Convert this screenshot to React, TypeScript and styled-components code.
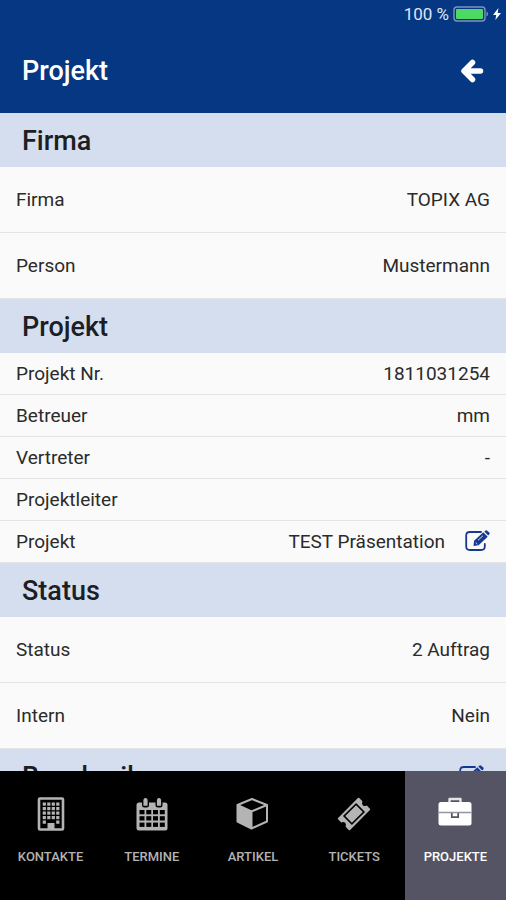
import React from "react";
import styled, { createGlobalStyle } from "styled-components";

const GlobalStyle = createGlobalStyle`
  *, *::before, *::after { box-sizing: border-box; }
  html, body { margin: 0; height: 100%; }
  #root { height: 100%; }
  body {
    background: #fafafa;
    color: #2b2b2b;
    font-family: Roboto, "Liberation Sans", sans-serif;
    overflow: hidden;
  }
`;

const Screen = styled.div`
  display: flex;
  flex-direction: column;
  height: 100vh;
`;

const Header = styled.header`
  flex: none;
  background: #053783;
  color: #fff;
`;

const StatusBar = styled.div`
  display: flex;
  align-items: center;
  justify-content: flex-end;
  gap: 4px;
  height: 28px;
  padding: 0 5px;
  font-size: 17px;
  color: #dfe6f5;
`;

const TitleBar = styled.div`
  display: flex;
  align-items: center;
  justify-content: space-between;
  height: 85px;
  padding: 0 22px;
`;

const Title = styled.h1`
  margin: 0;
  font-size: 27px;
  font-weight: 500;
`;

const IconButton = styled.button`
  display: flex;
  padding: 0;
  border: 0;
  background: none;
  color: inherit;
  cursor: pointer;
`;

const EditButton = styled(IconButton)`
  margin-left: 20px;
  color: #17388f;
`;

const Content = styled.main`
  flex: 1;
  min-height: 0;
  overflow: hidden;
`;

const SectionHeader = styled.div`
  display: flex;
  align-items: center;
  justify-content: space-between;
  height: 54px;
  padding: 0 22px;
  background: #d5deee;
`;

const SectionTitle = styled.h2`
  margin: 0;
  padding-top: 2px;
  font-size: 27px;
  font-weight: 500;
  color: #1c1e24;
`;

const Fields = styled.dl`
  margin: 0;
`;

const Row = styled.div<{ $tall?: boolean }>`
  display: flex;
  align-items: center;
  height: ${(p) => (p.$tall ? 66 : 42)}px;
  padding: 0 16px 1px;
  border-bottom: 1px solid #e3e4e6;
  font-size: 19px;
`;

const Label = styled.dt`
  flex: 1;
`;

const Value = styled.dd`
  display: flex;
  align-items: center;
  margin: 0;
`;

const TabBar = styled.nav`
  flex: none;
  display: grid;
  grid-template-columns: repeat(5, 1fr);
  height: 129px;
  background: #000;
`;

const Tab = styled.a<{ $active?: boolean }>`
  display: flex;
  flex-direction: column;
  align-items: center;
  gap: 18px;
  padding-top: 26px;
  background: ${(p) => (p.$active ? "#555464" : "transparent")};
  color: ${(p) => (p.$active ? "#fff" : "#b4b4b4")};
  font-size: 13px;
  font-weight: 500;
  line-height: 16px;
  text-decoration: none;
`;

const BatteryIcon = () => (
  <svg width="36" height="18" viewBox="0 0 36 18" aria-hidden="true">
    <rect x="1" y="2" width="31" height="14" rx="3" fill="none" stroke="#7f94bf" strokeWidth="1.4" />
    <rect x="3" y="4" width="27" height="10" rx="1" fill="#4cd964" />
    <path d="M33.500 6.500c2 .8 2 4.200 0 5z" fill="#7f94bf" />
  </svg>
);

const BoltIcon = () => (
  <svg width="8" height="14" viewBox="0 0 8 14" aria-hidden="true">
    <path d="M5.400 1 0 8h3.200L2.400 13 8 6H4.700z" fill="#fff" />
  </svg>
);

const BackIcon = () => (
  <svg width="24" height="26" viewBox="0 0 24 26" aria-hidden="true">
    <path d="M12.500 4.500 4 13l8.500 8.500M5 13h15.500" fill="none" stroke="#fff" strokeWidth="5.500" strokeLinecap="round" strokeLinejoin="round" />
  </svg>
);

const EditIcon = () => (
  <svg width="25" height="22" viewBox="0 0 25 22" aria-hidden="true">
    <path d="M16 2H5Q1.200 2 1.200 5.500v11Q1.200 20 5 20h11q3.800 0 3.800-3.500V14" fill="none" stroke="currentColor" strokeWidth="1.800" strokeLinecap="round" />
    <path d="M8.500 16l.6-5.300L18.300 2.300l4.400 4.400-9.100 8.600z" fill="currentColor" />
    <path d="M19.300 1.600 20.600.5q.8-.6 1.600.2l2.100 1.900q.8.800 0 1.600l-1.100 1.400z" fill="currentColor" />
    <path d="M13 10.300l5-4.600M10.700 12.500l1.700 1.700" stroke="#d5deee" strokeWidth="1" />
  </svg>
);

const BuildingIcon = () => (
  <svg width="34" height="34" viewBox="0 0 34 34" aria-hidden="true">
    <rect x="5" y="1.500" width="24" height="31" rx="1" fill="none" stroke="currentColor" strokeWidth="2.600" />
    <g fill="currentColor">
      {[5.500, 10, 14.500, 19].map((y) =>
        [8.700, 13.200, 17.700, 22.200].map((x) => <rect key={`${x}-${y}`} x={x} y={y} width="3.200" height="3.200" />)
      )}
      <path d="M8.700 23.500h3.200v3.200H8.700zM22.200 23.500h3.200v3.200h-3.200zM13.500 32v-6h7v6z" />
    </g>
  </svg>
);

const CalendarIcon = () => (
  <svg width="34" height="34" viewBox="0 0 34 34" aria-hidden="true">
    <rect x="1.500" y="5.500" width="31" height="28" rx="2.500" fill="currentColor" />
    <g fill="#000">
      <rect x="7" y="3" width="7" height="7.500" rx="2.500" />
      <rect x="20.500" y="3" width="7" height="7.500" rx="2.500" />
      {[13, 19.200, 25.600].map((y) =>
        [4.500, 11.300, 18, 24.800].map((x) => <rect key={`${x}-${y}`} x={x} y={y} width="5" height="4.300" />)
      )}
    </g>
    <g fill="none" stroke="currentColor" strokeWidth="2.200" strokeLinecap="round">
      <path d="M9.500 7.700V3q1-1.800 2 0v4.700zM23 7.700V3q1-1.800 2 0v4.700z" />
    </g>
  </svg>
);

const BoxIcon = () => (
  <svg width="34" height="34" viewBox="0 0 34 34" aria-hidden="true">
    <path d="M16 2 31 8v16.500L15.500 31.500 1.500 24.500V8z" fill="none" stroke="currentColor" strokeWidth="2" strokeLinejoin="round" />
    <path d="M1.500 8 15.500 14.500v17L1.500 24.500z" fill="currentColor" />
    <path d="M1.500 8l14 6.500L31 8M15.500 14.500v17" fill="none" stroke="currentColor" strokeWidth="2" />
  </svg>
);

const TicketIcon = () => (
  <svg width="34" height="34" viewBox="0 0 34 34" aria-hidden="true">
    <g transform="rotate(-45 17 17)">
      <path d="M3 9.500h28v4a3.700 3.700 0 0 0 0 7v4H3v-4a3.700 3.700 0 0 0 0-7z" fill="currentColor" stroke="currentColor" strokeWidth="2" strokeLinejoin="round" />
      <rect x="8.500" y="11.500" width="17" height="11" fill="none" stroke="#000" strokeWidth="1.600" />
    </g>
  </svg>
);

const BriefcaseIcon = () => (
  <svg width="34" height="34" viewBox="0 0 34 34" aria-hidden="true">
    <path d="M11.500 6V2h11v4" fill="none" stroke="#e4e4e8" strokeWidth="2.400" strokeLinejoin="round" />
    <rect x=".5" y="5" width="33" height="23.500" rx="2.500" fill="currentColor" />
    <path d="M.5 15.500h33" stroke="#96959f" strokeWidth="1.600" />
    <path d="M13.800 16v4.200h6.400V16" fill="none" stroke="#555464" strokeWidth="1.700" />
  </svg>
);

type Field = { label: string; value?: string; editable?: boolean };
type Section = { title: string; tall?: boolean; editable?: boolean; fields: Field[] };

const sections: Section[] = [
  {
    title: "Firma",
    tall: true,
    fields: [
      { label: "Firma", value: "TOPIX AG" },
      { label: "Person", value: "Mustermann" },
    ],
  },
  {
    title: "Projekt",
    fields: [
      { label: "Projekt Nr.", value: "1811031254" },
      { label: "Betreuer", value: "mm" },
      { label: "Vertreter", value: "-" },
      { label: "Projektleiter" },
      { label: "Projekt", value: "TEST Präsentation", editable: true },
    ],
  },
  {
    title: "Status",
    tall: true,
    fields: [
      { label: "Status", value: "2 Auftrag" },
      { label: "Intern", value: "Nein" },
    ],
  },
  { title: "Beschreibung", editable: true, fields: [] },
];

const tabs = [
  { label: "KONTAKTE", Icon: BuildingIcon },
  { label: "TERMINE", Icon: CalendarIcon },
  { label: "ARTIKEL", Icon: BoxIcon },
  { label: "TICKETS", Icon: TicketIcon },
  { label: "PROJEKTE", Icon: BriefcaseIcon, active: true },
];

const Edit = ({ name }: { name: string }) => (
  <EditButton type="button" aria-label={`${name} bearbeiten`}>
    <EditIcon />
  </EditButton>
);

export default function App() {
  return (
    <Screen>
      <GlobalStyle />
      <Header>
        <StatusBar>
          <span>100 %</span>
          <BatteryIcon />
          <BoltIcon />
        </StatusBar>
        <TitleBar>
          <Title>Projekt</Title>
          <IconButton type="button" aria-label="Zurück">
            <BackIcon />
          </IconButton>
        </TitleBar>
      </Header>
      <Content>
        {sections.map((section) => (
          <section key={section.title}>
            <SectionHeader>
              <SectionTitle>{section.title}</SectionTitle>
              {section.editable && <Edit name={section.title} />}
            </SectionHeader>
            {section.fields.length > 0 && (
              <Fields>
                {section.fields.map((field) => (
                  <Row key={field.label} $tall={section.tall}>
                    <Label>{field.label}</Label>
                    <Value>
                      {field.value}
                      {field.editable && <Edit name={field.label} />}
                    </Value>
                  </Row>
                ))}
              </Fields>
            )}
          </section>
        ))}
      </Content>
      <TabBar>
        {tabs.map(({ label, Icon, active }) => (
          <Tab key={label} href="#" $active={active} aria-current={active ? "page" : undefined}>
            <Icon />
            {label}
          </Tab>
        ))}
      </TabBar>
    </Screen>
  );
}
